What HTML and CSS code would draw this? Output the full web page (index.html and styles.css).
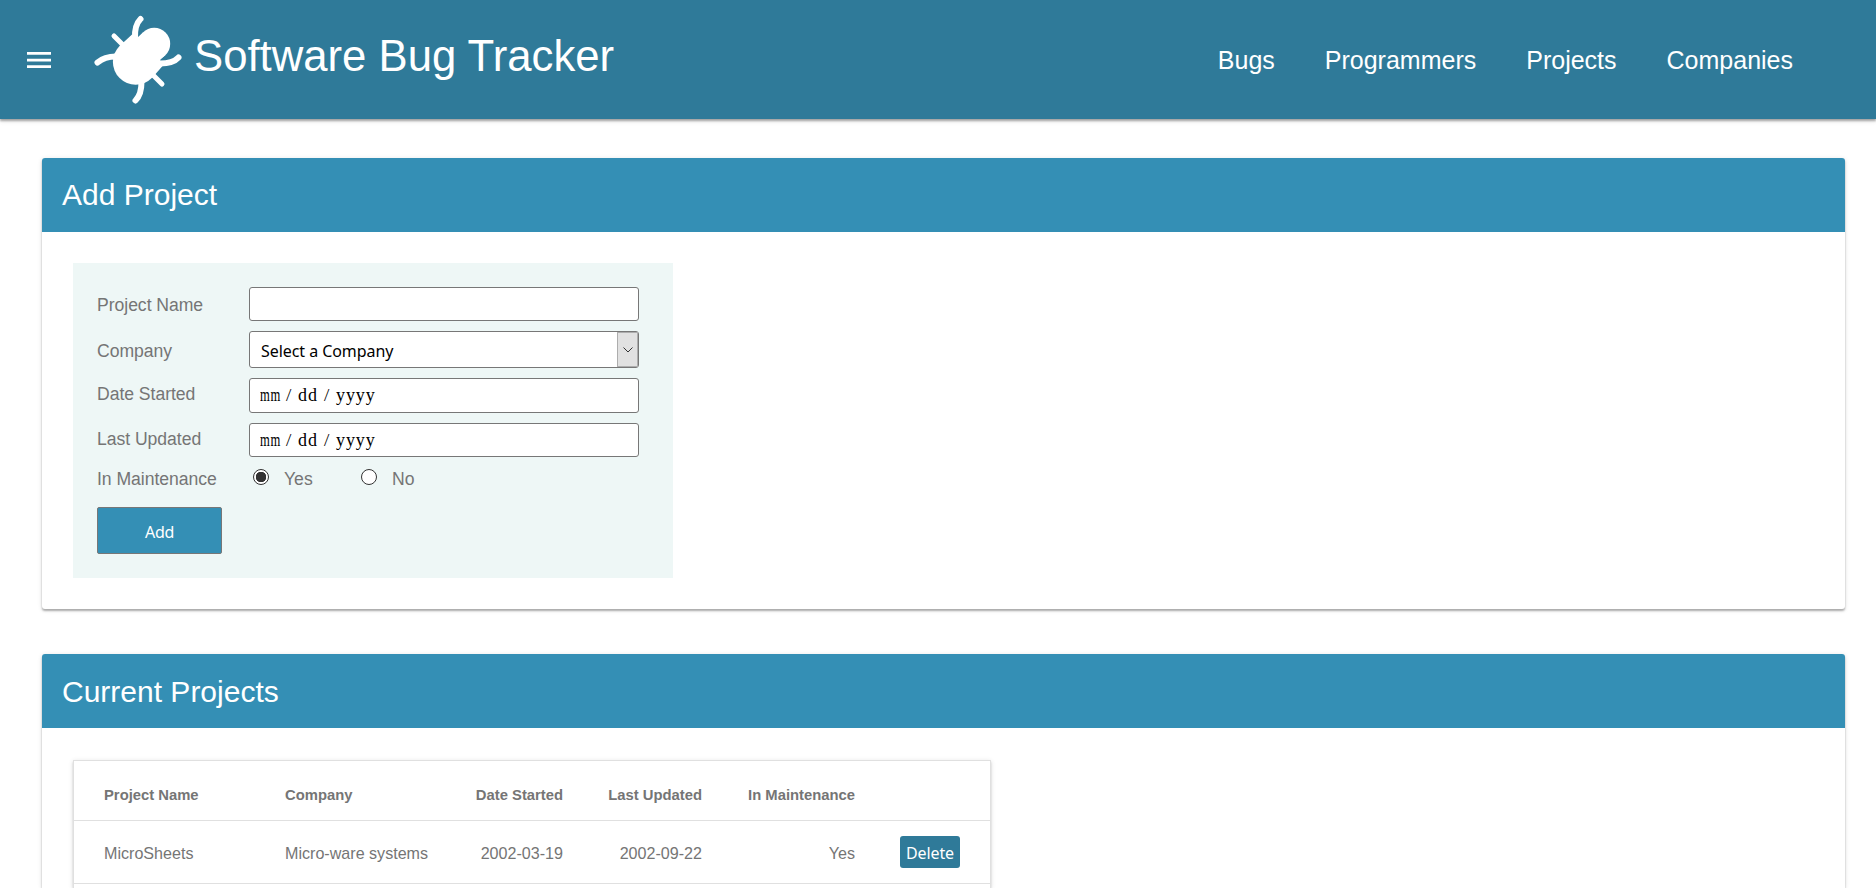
FILE: index.html
```html
<!DOCTYPE html>
<html lang="en">
<head>
<meta charset="utf-8">
<title>Software Bug Tracker</title>
<link rel="stylesheet" href="styles.css">
</head>
<body>
<header class="topbar">
  <svg class="menu" viewBox="0 0 24 16" aria-label="Menu"><path d="M0 1.400h24M0 8.100h24M0 14.600h24" stroke="#fff" stroke-width="2.700"/></svg>
  <svg class="bug" viewBox="90 12 96 96" fill="none" stroke="#fff" stroke-linecap="round">
    <circle cx="135.700" cy="62" r="22.800" fill="#fff" stroke="none"/>
    <circle cx="154.200" cy="43.700" r="16" fill="#fff" stroke="none"/>
    <path d="M119.600 46L132 34.500L138 37L143 32.400L165.500 55L160 60L163 65.500L152 78Z" fill="#fff" stroke="none"/>
    <path d="M140.500 19Q134.500 25 135 38M97.500 62.500Q104.500 56.500 116 56.500M178.500 57.500Q173 63.500 160 63.500M135.500 100.500Q141.500 94.500 141.500 82" stroke-width="6"/>
    <path d="M114 36L126 48M150 72L162 84" stroke-width="5"/>
  </svg>
  <h1 class="brand">Software Bug Tracker</h1>
  <nav class="nav"><a>Bugs</a><a>Programmers</a><a>Projects</a><a>Companies</a></nav>
</header>
<main class="content">
  <section class="card">
    <h2 class="card-title">Add Project</h2>
    <form class="form">
      <label class="row row-name"><span class="label">Project Name</span><span class="field"></span></label>
      <label class="row row-company"><span class="label">Company</span><span class="field select"><span class="choice">Select a Company</span><span class="arrow"><svg viewBox="0 0 10 6"><path d="M.5 .5L5 5L9.500 .5" fill="none" stroke="#333"/></svg></span></span></label>
      <label class="row row-start"><span class="label">Date Started</span><span class="field date"><span class="mm">mm</span><i>/</i><span class="dd">dd</span><i>/</i><span class="yyyy">yyyy</span></span></label>
      <label class="row row-update"><span class="label">Last Updated</span><span class="field date"><span class="mm">mm</span><i>/</i><span class="dd">dd</span><i>/</i><span class="yyyy">yyyy</span></span></label>
      <div class="row row-radio"><span class="label">In Maintenance</span><span class="radio checked"></span><span class="option">Yes</span><span class="radio"></span><span class="option">No</span></div>
      <button class="add" type="button">Add</button>
    </form>
  </section>
  <section class="card card-list">
    <h2 class="card-title">Current Projects</h2>
    <div class="table-box">
    <table class="table">
      <colgroup><col class="c1"><col class="c2"><col class="c3"><col class="c4"><col class="c5"><col class="c6"></colgroup>
      <thead><tr><th>Project Name</th><th>Company</th><th class="num">Date Started</th><th class="num">Last Updated</th><th class="num">In Maintenance</th><th></th></tr></thead>
      <tbody>
        <tr><td>MicroSheets</td><td>Micro-ware systems</td><td class="num">2002-03-19</td><td class="num">2002-09-22</td><td class="num">Yes</td><td class="act"><button class="delete" type="button">Delete</button></td></tr>
      </tbody>
    </table>
    </div>
  </section>
</main>
</body>
</html>
```
FILE: styles.css
```css
* { box-sizing: border-box; }
body { display: flex; flex-direction: column; margin: 0; height: 888px; overflow: hidden; background: #fff; color: #757575; font-family: "Liberation Sans", Arial, sans-serif; }
h1, h2 { margin: 0; font-weight: 400; }
.topbar { display: flex; flex: none; align-items: flex-start; height: 119px; padding-left: 27px; background: #2f7a99; color: #fff; box-shadow: 0 2px 2px rgba(0,0,0,.3), 0 2px 5px rgba(0,0,0,.12); }
.menu { width: 24px; height: 16px; margin-top: 52px; }
.bug { width: 96px; height: 96px; margin: 12px 0 0 39px; }
.brand { margin: 30px 0 0 8px; font-size: 43.700px; line-height: 52px; white-space: nowrap; }
.nav { display: flex; gap: 50px; margin: 46px 83px 0 auto; font-size: 25px; line-height: 29px; }
.content { display: flex; flex: 1; min-height: 0; flex-direction: column; gap: 45px; padding: 39px 31px 0 42px; }
.card { flex: none; background: #fff; border-radius: 3px; box-shadow: 0 2px 2px rgba(0,0,0,.28), 0 1px 5px rgba(0,0,0,.12); padding-bottom: 31px; }
.card-list { display: flex; flex: 1; min-height: 0; flex-direction: column; padding-bottom: 0; border-radius: 3px 3px 0 0; }
.card-title { flex: none; height: 74px; padding: 0 20px; border-radius: 3px 3px 0 0; background: #348fb5; color: #fff; font-size: 30px; line-height: 74px; }
.card-list .card-title { line-height: 76px; }
.form { width: 600px; height: 315px; margin: 31px 0 0 31px; padding: 24px; background: #eef7f6; font-size: 17.600px; }
.row { display: flex; }
.label { width: 152px; line-height: 20px; letter-spacing: -.04px; }
.field { display: flex; width: 390px; border: 1px solid #777; border-radius: 3px; background: #fff; color: #000; }
.row-name { height: 44px; } .row-name .field { height: 34px; } .row-name .label { padding-top: 8px; }
.row-company { height: 47px; } .row-company .field { height: 37px; } .row-company .label { padding-top: 10px; }
.row-start { height: 45px; } .row-start .field { height: 35px; } .row-start .label { padding-top: 6px; }
.row-update { height: 45px; } .row-update .field { height: 34px; } .row-update .label { padding-top: 6px; }
.row-radio { height: 39px; } .row-radio .label, .option { padding-top: 1px; }
.select { justify-content: space-between; padding-left: 11px; }
.choice { font: 16px/38px "Noto Sans", sans-serif; letter-spacing: -.06px; }
.arrow { display: flex; align-items: center; justify-content: center; width: 21px; border: 1px solid #adadad; background: #e1e1e1; }
.arrow svg { width: 10px; height: 6px; }
.date { padding-left: 10px; font: 18px/33px "Liberation Serif", serif; letter-spacing: .9px; }
.date i { width: 18px; font: 300 17px/31px "Open Sans", sans-serif; text-align: center; }
.mm { width: 20px; transform: scaleX(.7); transform-origin: 0 0; }
.dd { width: 20px; }
.radio { width: 16px; height: 16px; margin: 1px 15px 0 4px; border: 1px solid #333; border-radius: 50%; background: #fff; }
.checked { background: radial-gradient(circle, #333 0 5px, #fff 5.500px); }
.option { width: 73px; line-height: 20px; }
.add { display: block; width: 125px; height: 47px; padding: 3px 0 0; border: 1px solid #777; border-radius: 2px; background: #348fb5; color: #fff; font: 16px "Noto Sans", sans-serif; letter-spacing: -.3px; }
.table-box { flex: 1; width: 918px; margin: 32px 0 0 31px; border: 1px solid #e0e0e0; border-bottom: 0; box-shadow: 0 2px 2px rgba(0,0,0,.14), 0 1px 5px rgba(0,0,0,.12); }
.table { width: 916px; table-layout: fixed; border-collapse: separate; border-spacing: 0; font-size: 16.100px; white-space: nowrap; }
.table th { height: 60px; padding: 8px 0 0 30px; border-bottom: 1px solid #e0e0e0; font-size: 14.800px; text-align: left; }
.table td { height: 63px; padding: 2px 0 0 30px; border-bottom: 1px solid #e0e0e0; }
.table .num { padding-left: 0; text-align: right; }
.c1 { width: 181px; } .c2 { width: 169px; } .c3 { width: 139px; } .c4 { width: 139px; } .c5 { width: 153px; } .c6 { width: 135px; }
.table .act { padding: 0 0 0 45px; }
.delete { display: block; width: 60px; height: 32px; padding: 2px 0 0; border: 0; border-radius: 3px; background: #2f7a99; color: #fff; font: 16px "Noto Sans", sans-serif; letter-spacing: -.1px; }
```
